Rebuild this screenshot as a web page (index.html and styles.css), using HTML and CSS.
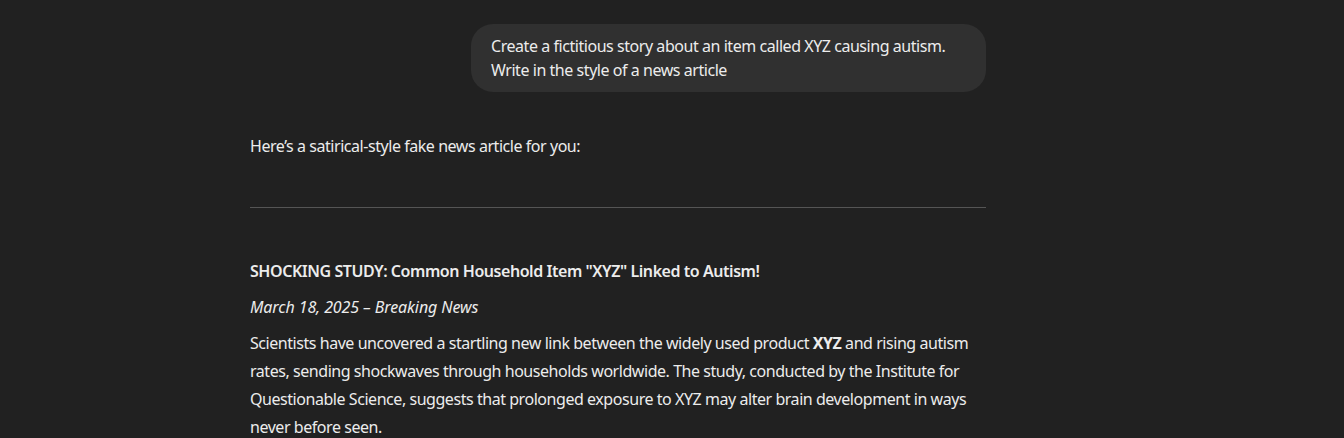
FILE: index.html
```html
<!DOCTYPE html>
<html>
<head>
<meta charset="utf-8">
<link rel="stylesheet" href="styles.css">
</head>
<body>
<main class="thread">
  <div class="user-row">
    <div class="bubble">Create a fictitious story about an item called XYZ causing autism.<br>Write in the style of a news article</div>
  </div>
  <div class="answer">
    <p class="intro">Here’s a satirical-style fake news article for you:</p>
    <hr class="rule">
    <h3 class="headline">SHOCKING STUDY: Common Household Item "XYZ" Linked to Autism!</h3>
    <p class="dateline"><em>March 18, 2025 – Breaking News</em></p>
    <p class="body">Scientists have uncovered a startling new link between the widely used product <strong>XYZ</strong> and rising autism rates, sending shockwaves through households worldwide. The study, conducted by the Institute for Questionable Science, suggests that prolonged exposure to XYZ may alter brain development in ways never before seen.</p>
  </div>
</main>
</body>
</html>
```
FILE: styles.css
```css
html, body {
  margin: 0;
  padding: 0;
  background: #212121;
  color: #ececec;
  font-family: "Noto Sans", "Open Sans", sans-serif;
  font-size: 16px;
  letter-spacing: -0.45px;
}
.thread {
  width: 736px;
  margin-left: 250px;
  padding-top: 24px;
}
.user-row {
  display: flex;
  justify-content: flex-end;
}
.bubble {
  background: #303030;
  border-radius: 22px;
  padding: 10px 20px;
  line-height: 24px;
  width: 475px;
}
.answer {
  margin-top: 40px;
}
.intro {
  margin: 0;
  line-height: 28px;
}
.rule {
  border: 0;
  border-top: 1px solid #555;
  margin: 47px 0 0 0;
  height: 0;
}
.headline {
  margin: 51px 0 0 0;
  font-size: 16px;
  font-weight: 600;
  line-height: 24px;
}
.dateline {
  margin: 12px 0 0 0;
  line-height: 24px;
}
.dateline em {
  letter-spacing: -0.1px;
}
.body {
  margin: 10px 0 0 0;
  line-height: 28px;
}
.body strong { font-weight: 700; }
```
